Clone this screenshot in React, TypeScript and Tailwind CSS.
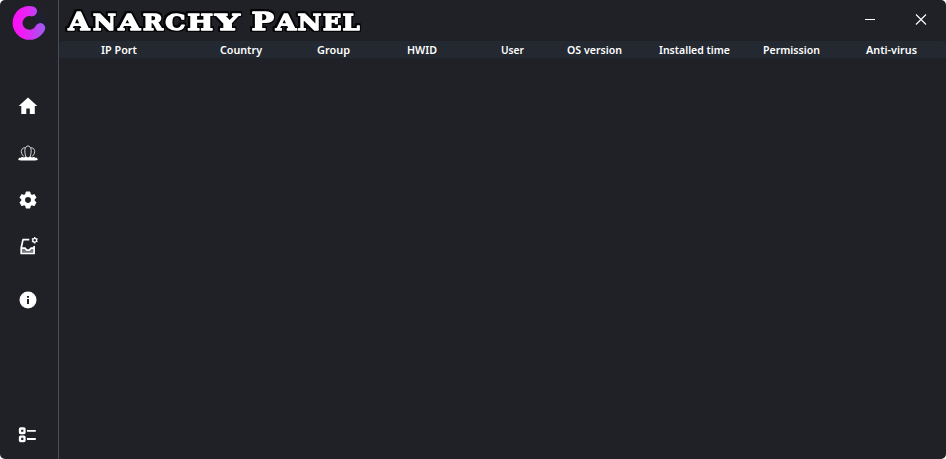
import React from "react";

const columns = [
  { label: "IP Port", cell: "w-[118px]", text: "w-[35px]", length: 36 },
  { label: "Country", cell: "w-[128px]", text: "w-[42px]", length: 42 },
  { label: "Group", cell: "w-[57px]", text: "w-[33px]", length: 33 },
  { label: "HWID", cell: "w-[120px]", text: "w-[30px]", length: 30 },
  { label: "User", cell: "w-[61px]", text: "w-[23px]", length: 23 },
  { label: "OS version", cell: "w-[103px]", text: "w-[55px]", length: 55 },
  { label: "Installed time", cell: "w-[98px]", text: "w-[72px]", length: 71 },
  { label: "Permission", cell: "w-[96px]", text: "w-[58px]", length: 57 },
  { label: "Anti-virus", cell: "w-[103px]", text: "w-[51px]", length: 51 },
];

const titleLetters = [
  { ch: "A", x: 68.3, w: 21.4, size: 25 },
  { ch: "N", x: 92.8, w: 23.4, size: 22.5 },
  { ch: "A", x: 118.3, w: 22, size: 22.5 },
  { ch: "R", x: 142.8, w: 20.4, size: 22.5 },
  { ch: "C", x: 165.3, w: 20.2, size: 22.5 },
  { ch: "H", x: 187.3, w: 26, size: 22.5 },
  { ch: "Y", x: 215, w: 24.8, size: 22.5 },
  { ch: "P", x: 251.6, w: 22.6, size: 25 },
  { ch: "A", x: 275.8, w: 20.5, size: 22.5 },
  { ch: "N", x: 297.6, w: 24, size: 22.5 },
  { ch: "E", x: 322.8, w: 18.8, size: 22.5 },
  { ch: "L", x: 342.6, w: 17.2, size: 22.5 },
];

function Logo() {
  return (
    <svg className="mt-[5px] ml-3 h-[36px] w-[34px] shrink-0" viewBox="12 5 34 36">
      <defs>
        <linearGradient id="ring" gradientUnits="userSpaceOnUse" x1="12" y1="24" x2="46" y2="24">
          <stop offset="0" stopColor="#ff0cf5" />
          <stop offset="0.45" stopColor="#e526f4" />
          <stop offset="1" stopColor="#9660f0" />
        </linearGradient>
      </defs>
      <circle cx="29" cy="22.7" r="11.7" fill="none" stroke="#202033" strokeWidth="10" />
      <path d="M32 11.3A11.9 11.9 0 1 0 40.2 28.1" fill="none" stroke="url(#ring)" strokeWidth="10" strokeLinecap="round" />
    </svg>
  );
}

function HomeIcon() {
  return (
    <svg className="h-5 w-5" viewBox="0 0 20 20">
      <path d="M10 1.5 19.3 10h-2.5v8h-5v-5.6H8.3V18h-5v-8H.7Z" fill="white" />
    </svg>
  );
}

function CrownIcon() {
  return (
    <svg className="h-5 w-5" viewBox="0 0 20 20" fill="none" stroke="#d6d6d9" strokeWidth="1">
      <path d="M8 14C5.800 8 6.800 3 10 3s4.200 5 2 11M5.800 13.500C1.200 9 3.600 4.400 7.200 4.800M14.200 13.500c4.600-4.500 2.200-9.100-1.400-8.700" />
      <path d="M.3 17c.2-2.200 1.200-2.400 2-2 .8-1.300 2.600-1.500 3.700-.4 1.100-1.300 3-1.300 4 0 1-1.300 2.900-1.300 4 0 1.100-1.100 2.900-.9 3.700.4.800-.4 1.800-.2 2 2l-2.700.5H3Z" fill="white" stroke="none" />
    </svg>
  );
}

function GearIcon() {
  return (
    <svg className="h-5 w-5" viewBox="0 0 20 20" fill="white">
      <path
        fillRule="evenodd"
        stroke="white"
        strokeWidth="1.200"
        strokeLinejoin="round"
        d="M8.300 2.200h3.400l.5 2.300 1.700 1 2.200-.8 1.700 2.900-1.700 1.500v1.900l1.700 1.500-1.700 2.900-2.200-.8-1.700 1-.5 2.300H8.300l-.5-2.300-1.700-1-2.200.8-1.700-2.900 1.700-1.500V9.100L2.200 7.600l1.700-2.900 2.200.8 1.700-1ZM10 6.400a3.600 3.600 0 1 0 0 7.200 3.600 3.600 0 0 0 0-7.200Z"
      />
    </svg>
  );
}

function InboxIcon() {
  return (
    <svg className="h-5 w-5" viewBox="0 0 20 20" fill="none" stroke="white" strokeWidth="1.700" strokeLinejoin="round">
      <path d="M3.500 12.500h3.700l1.300 2h3.400l1.300-2h3v5H3.500Z" fill="#77787b" stroke="none" />
      <path d="M11.300 3.600H5L3.200 12v5.500h12.900V10M3.200 12.200h4l1.400 1.900h2.900l1.400-1.900h3.100" />
      <circle cx="16.700" cy="4.200" r="1.900" strokeWidth="1.300" />
      <path d="M16.700 1v1.200M16.700 6.300v1.200M13.900 2.600l1 .6M18.500 5.200l1 .6M13.900 5.800l1-.6M18.500 3.200l1-.6" strokeWidth="1.300" />
    </svg>
  );
}

function InfoIcon() {
  return (
    <svg className="h-5 w-5" viewBox="0 0 20 20">
      <circle cx="10" cy="10" r="8.500" fill="white" />
      <path d="M9 5.900h2v1.900H9zM9 9.100h2v5H9z" fill="#202126" />
    </svg>
  );
}

function ListIcon() {
  return (
    <svg className="h-5 w-5" viewBox="0 0 20 20" fill="none" stroke="white">
      <rect x="2" y="3.500" width="4.500" height="4.500" rx="0.600" strokeWidth="2.300" />
      <rect x="2" y="11.600" width="4.500" height="4.500" rx="0.600" strokeWidth="2.300" />
      <path d="M9 5.900h8.800M9 14h8.800" strokeWidth="1.900" />
    </svg>
  );
}

function Title() {
  return (
    <svg
      className="h-[41px] w-[305px] font-['DejaVu_Serif'] font-bold [filter:drop-shadow(1.3px_0_0_#050507)_drop-shadow(-1.3px_0_0_#050507)_drop-shadow(0_1.3px_0_#050507)_drop-shadow(0_-1.3px_0_#050507)]"
      viewBox="59 0 305 41"
      fill="white"
      stroke="white"
      strokeWidth="1.300"
      strokeLinejoin="round"
      aria-label="Anarchy Panel"
    >
      {titleLetters.map((l) => (
        <text key={l.x} x={l.x} y="30.300" fontSize={l.size} textLength={l.w} lengthAdjust="spacingAndGlyphs">
          {l.ch}
        </text>
      ))}
    </svg>
  );
}

export default function App() {
  return (
    <div className="h-[459px] w-[946px] bg-white">
      <div className="flex h-full w-full overflow-hidden rounded-[5px] bg-[#202126]">
        <aside className="flex w-[59px] shrink-0 flex-col border-r border-[#4b4c50]">
          <Logo />
          <nav className="mt-[55px] flex flex-1 flex-col items-center pr-[2px]">
            <HomeIcon />
            <div className="mt-[27px] h-5"><CrownIcon /></div>
            <div className="mt-[27px] h-5"><GearIcon /></div>
            <div className="mt-[26px] h-5"><InboxIcon /></div>
            <div className="mt-[34px] h-5"><InfoIcon /></div>
            <div className="mt-auto mb-[14px] h-5"><ListIcon /></div>
          </nav>
        </aside>
        <main className="flex min-w-0 flex-1 flex-col">
          <header className="flex h-[41px] shrink-0 justify-between">
            <Title />
            <div className="flex pt-[13px] pr-[19px]">
              <svg className="h-3 w-[62px]" viewBox="865 13 62 12" fill="none" stroke="white">
                <path d="M865 19.500h10" />
                <path d="m916 14.500 10 10m0-10-10 10" strokeWidth="1.100" />
              </svg>
            </div>
          </header>
          <div className="flex h-[17px] shrink-0 rounded-t-[4px] bg-[#232831] font-['Noto_Sans','Open_Sans',sans-serif] text-[11px] font-semibold text-white">
            {columns.map((c) => (
              <div key={c.label} className={`flex shrink-0 justify-center ${c.cell}`}>
                <svg className={`h-[17px] overflow-visible ${c.text}`} fill="white">
                  <text x="0" y="13" textLength={c.length} lengthAdjust="spacingAndGlyphs">{c.label}</text>
                </svg>
              </div>
            ))}
          </div>
        </main>
      </div>
    </div>
  );
}
